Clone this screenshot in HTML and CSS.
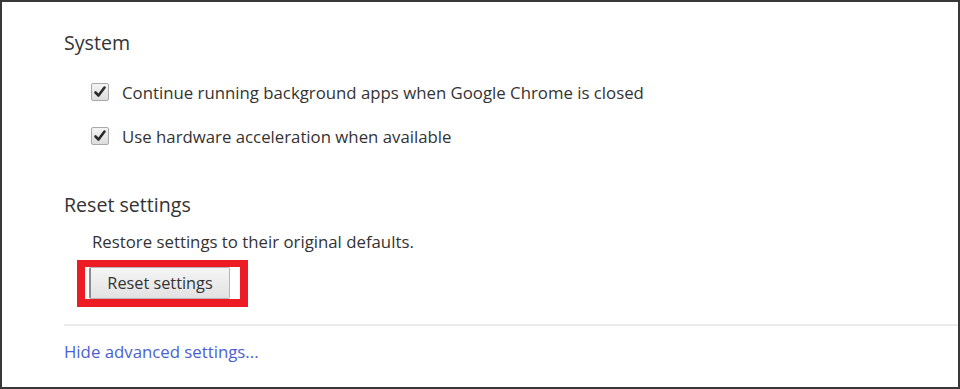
FILE: index.html
```html
<!DOCTYPE html>
<html lang="en">

<head>
    <meta charset="UTF-8">
    <meta name="viewport" content="width=device-width, initial-scale=1.0">
    <title>Settings</title>
    <link rel="stylesheet" href="styles.css">
</head>

<body>
    <div class="frame">
        <h2 class="title">System</h2>
        <div class="option">
            <span class="box">
                <svg width="18" height="18" viewBox="0 0 18 18"><path d="M4.5 9.5 L7.5 12.5 L13.5 4.5" fill="none" stroke="#2a2a2a" stroke-width="2.6" stroke-linecap="round" stroke-linejoin="round"/></svg>
            </span>
            <span>Continue running background apps when Google Chrome is closed</span>
        </div>
        <div class="option">
            <span class="box">
                <svg width="18" height="18" viewBox="0 0 18 18"><path d="M4.5 9.5 L7.5 12.5 L13.5 4.5" fill="none" stroke="#2a2a2a" stroke-width="2.6" stroke-linecap="round" stroke-linejoin="round"/></svg>
            </span>
            <span>Use hardware acceleration when available</span>
        </div>

        <h2 class="title reset-title">Reset settings</h2>
        <p class="note">Restore settings to their original defaults.</p>
        <div class="mark">
            <button class="btn">Reset settings</button>
        </div>

        <hr class="sep">
        <a class="link" href="#">Hide advanced settings...</a>
    </div>
</body>

</html>
```

FILE: styles.css
```css
html, body {
    margin: 0;
    padding: 0;
    background: #fff;
}

.frame {
    box-sizing: border-box;
    width: 960px;
    height: 389px;
    border: 2px solid #383838;
    padding-left: 62px;
    font-family: "Open Sans", "Noto Sans", sans-serif;
    font-size: 16.8px;
    color: #333;
    overflow: hidden;
}

.title {
    margin: 29px 0 15px 0;
    font-size: 19.6px;
    font-weight: normal;
    line-height: 24px;
    color: #333;
}

.reset-title {
    margin: 35px 0 13px 0;
}

.option {
    display: flex;
    align-items: center;
    height: 44px;
    padding-left: 27px;
}

.box {
    display: flex;
    box-sizing: border-box;
    width: 18px;
    height: 18px;
    margin-right: 13px;
    border: 1px solid #a9a9a9;
    border-radius: 2px;
    background: linear-gradient(#f4f4f4, #dcdcdc);
    align-items: center;
    justify-content: center;
}

.box svg {
    margin: -1px;
}

.note {
    margin: 0 0 6px 28px;
    line-height: 24px;
}

.mark {
    display: inline-block;
    margin-left: 13px;
    border-style: solid;
    border-color: #ed1c24;
    border-width: 7px 8px 8px 8px;
    padding: 0 10px 0 4px;
    background: #fff;
}

.btn {
    display: block;
    box-sizing: border-box;
    width: 141px;
    height: 32px;
    margin: 0;
    border: 1px solid #b5b5b5;
    border-left: 2px solid #8c8c8c;
    border-radius: 2px;
    background: linear-gradient(#f5f5f5, #e2e2e2);
    font-family: inherit;
    font-size: 16.3px;
    color: #333;
    padding: 0;
}

.sep {
    margin: 17px 0 0 0;
    border: 0;
    border-top: 2px solid #ebebeb;
    height: 0;
}

.link {
    display: block;
    margin-top: 14px;
    line-height: 24px;
    color: #4b5fd1;
    text-decoration: none;
}
```
